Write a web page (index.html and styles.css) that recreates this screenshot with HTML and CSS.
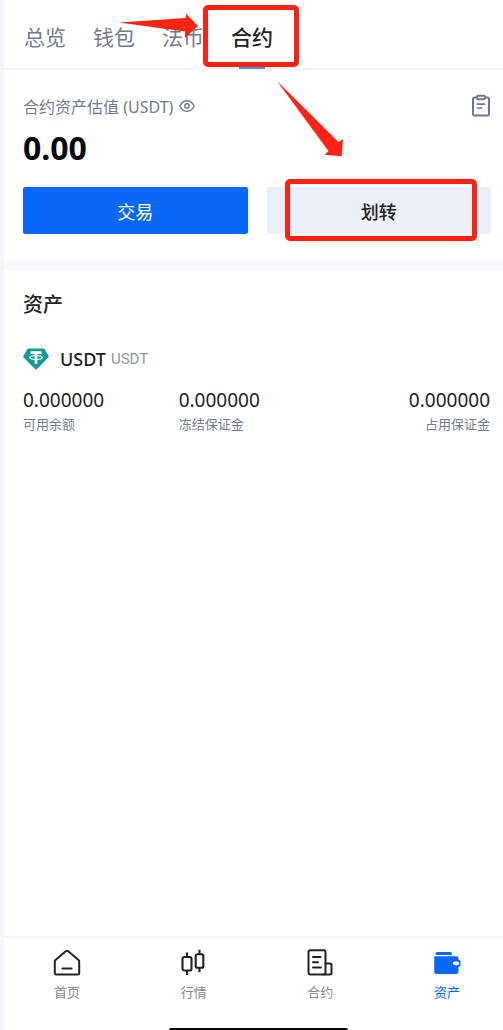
FILE: index.html
```
<!DOCTYPE html>
<html lang="zh-CN">
<head>
<meta charset="utf-8">
<meta name="viewport" content="width=device-width, initial-scale=1">
<title>合约资产</title>
<link rel="stylesheet" href="styles.css">
</head>
<body>
<div class="app">
  <nav class="tabs">
    <a class="tab" href="#overview">总览</a>
    <a class="tab" href="#wallet">钱包</a>
    <a class="tab" href="#fiat">法币</a>
    <a class="tab tab-active" href="#futures">合约<span class="mark mark-tab"></span></a>
  </nav>
  <main class="content">
    <section class="summary">
      <div class="summary-top">
        <span class="summary-label">合约资产估值 (USDT)</span>
        <button class="icon-button" type="button" aria-label="显示或隐藏">
          <svg width="16" height="16" viewBox="0 0 16 16" fill="none" stroke="#727b8e" stroke-width="1.5"><path d="M.8 8C2.6 4.4 5 2.700 8 2.700S13.400 4.400 15.200 8C13.400 11.600 11 13.300 8 13.300S2.600 11.600.8 8z"/><circle cx="8" cy="8" r="2.200"/></svg>
        </button>
        <button class="icon-button records" type="button" aria-label="记录">
          <svg width="20" height="24" viewBox="0 0 20 24" fill="none" stroke="#6f788c" stroke-width="2" stroke-linejoin="round" stroke-linecap="round"><path d="M6 3.500H3.500Q2 3.500 2 5V20Q2 21.500 3.500 21.500H16.500Q18 21.500 18 20V5Q18 3.500 16.500 3.500H14"/><rect x="6" y="1.800" width="8" height="3.400" rx="1.200"/><path d="M6.500 10.200H13.500M6.500 14H10.500" stroke-width="1.700"/></svg>
        </button>
      </div>
      <div class="balance">0.00</div>
      <div class="actions">
        <button class="action action-primary" type="button">交易</button>
        <button class="action action-plain" type="button">划转<span class="mark mark-action"></span></button>
      </div>
    </section>
    <section class="assets">
      <h2 class="assets-title">资产</h2>
      <div class="coin">
        <svg width="26" height="22" viewBox="0 0 26 22"><path d="M5.500.5H20.500Q21.300.5 21.700 1.200L25.700 8.300Q26 9 25.400 9.600L13.700 21.200Q13 21.800 12.300 21.200L.6 9.600Q0 9 .3 8.300L4.300 1.200Q4.700.5 5.500.5z" fill="#159a91"/><path d="M7.500 4.600H18.500M13 4.600V16" stroke="#fff" stroke-width="2.600" fill="none"/><ellipse cx="13" cy="9.500" rx="6.300" ry="1.900" fill="none" stroke="#fff" stroke-width="1.200"/></svg>
        <span class="coin-name">USDT</span>
        <span class="coin-full">USDT</span>
      </div>
      <dl class="figures">
        <div class="figure"><dt>可用余额</dt><dd>0.000000</dd></div>
        <div class="figure"><dt>冻结保证金</dt><dd>0.000000</dd></div>
        <div class="figure figure-end"><dt>占用保证金</dt><dd>0.000000</dd></div>
      </dl>
    </section>
  </main>
  <footer class="bottom">
    <nav class="menu">
      <a class="menu-item" href="#home">
        <svg width="28" height="28" viewBox="0 0 28 28" fill="none" stroke="#222" stroke-width="2" stroke-linejoin="round" stroke-linecap="round"><path d="M1.800 12.500Q1.800 11.500 2.500 10.900L13 2.100Q14 1.400 15 2.100L25.500 10.900Q26.200 11.500 26.200 12.500V24Q26.200 25.500 24.700 25.500H3.300Q1.800 25.500 1.800 24z"/><path d="M9.500 19.500H18.500" stroke-width="2.200"/></svg>
        首页</a>
      <a class="menu-item" href="#markets">
        <svg width="28" height="28" viewBox="0 0 28 28" fill="none" stroke="#222" stroke-width="2.100" stroke-linecap="butt"><rect x="2.500" y="8" width="9" height="13.500" rx="1.800"/><path d="M7 3.500V8M7 21.500V26"/><rect x="15.700" y="5.200" width="7.600" height="13.500" rx="1.800"/><path d="M19.500 .8V5.200M19.500 18.700V23.200"/></svg>
        行情</a>
      <a class="menu-item" href="#contracts">
        <svg width="28" height="28" viewBox="0 0 28 28" fill="none" stroke="#222" stroke-width="2" stroke-linejoin="round" stroke-linecap="round"><rect x="2.500" y="1.200" width="17" height="24.300" rx="2"/><path d="M7 8H14.500M7 13.200H12M7 18.400H15"/><path d="M19.500 14.500H24Q25.500 14.500 25.500 16V24Q25.500 25.500 24 25.500H18"/></svg>
        合约</a>
      <a class="menu-item menu-active" href="#assets">
        <svg width="28" height="28" viewBox="0 0 28 28"><path d="M4.200 3H17.500Q19 3 19 4.500V6H2.700V4.500Q2.700 3 4.200 3z" fill="#0868fb"/><path d="M1.200 7.200H23.500Q25.500 7.200 25.500 9.200V11H26Q27.600 11 27.600 12.700V16Q27.600 17.700 26 17.700H25.500V22.500Q25.500 25 23 25H3.700Q1.200 25 1.200 22.500z" fill="#0868fb"/><rect x="20" y="12.600" width="6.200" height="3.700" rx="1.800" fill="#fff"/></svg>
        资产</a>
    </nav>
    <div class="home-bar"></div>
  </footer>
  <svg class="arrows" width="360" height="170" viewBox="0 0 360 170" fill="#ff2313" aria-hidden="true"><path d="M119 22.500L186 18V13.500L198 26L185 38V31.500Z"/><path d="M277 81L338.500 142L343 139L341.700 156.300L324.500 154.800L328.500 151Z"/></svg>
</div>
</body>
</html>
```
FILE: styles.css
```
* {
  box-sizing: border-box;
}

body {
  margin: 0;
  background: #fff;
  color: #222;
  font-family: "Noto Sans", "Noto Sans CJK SC", sans-serif;
}

a {
  color: inherit;
  text-decoration: none;
}

button {
  border: 0;
  padding: 0;
  font: inherit;
  color: inherit;
  background: none;
}

svg {
  display: block;
  flex: none;
}

.app {
  position: relative;
  display: flex;
  flex-direction: column;
  min-height: 100vh;
  overflow: hidden;
  border-left: 4px solid #f4f6fa;
}

.tabs {
  display: flex;
  gap: 27px;
  padding: 0 20px;
  border-bottom: 2px solid #f3f4f6;
  font-size: 21px;
  line-height: 32px;
  color: #727b8e;
}

.tab {
  position: relative;
  padding: 21px 0 15px;
}

.tab-active {
  color: #222;
  font-weight: 500;
}

.tab-active::after {
  content: "";
  position: absolute;
  bottom: -1px;
  left: 8px;
  right: 8px;
  height: 3px;
  background: #4f91f6;
}

.mark {
  position: absolute;
  z-index: 1;
  border: 5px solid #ff2010;
  border-radius: 5px;
}

.mark-tab {
  inset: 5px -26px 1px -28px;
}

.mark-action {
  inset: -8px 14px -7px 18px;
}

.arrows {
  position: absolute;
  top: 0;
  left: -4px;
  z-index: 2;
  pointer-events: none;
}

.content {
  flex: 1;
}

.summary {
  padding: 24px 12px 26px 19px;
  border-bottom: 10px solid #f7f9fc;
}

.summary-top {
  display: flex;
  align-items: center;
  gap: 6px;
  height: 23px;
  font-size: 16px;
  color: #727b8e;
}

.records {
  margin-left: auto;
}

.balance {
  margin: 11px 0 19px;
  font-size: 32px;
  line-height: 40px;
  font-weight: 700;
  color: #08090b;
}

.actions {
  display: grid;
  grid-template-columns: 1fr 1fr;
  gap: 19px;
}

.action {
  position: relative;
  height: 47px;
  border-radius: 2px;
  font-size: 18px;
}

.action-primary {
  color: #fff;
  background: #0868fb;
}

.action-plain {
  font-weight: 500;
  background: #ebeff8;
}

.assets {
  padding: 19px 13px 20px 19px;
}

.assets-title {
  margin: 0;
  font-size: 20px;
  line-height: 32px;
  font-weight: 500;
}

.coin {
  display: flex;
  align-items: center;
  margin: 25px 0 14px;
  line-height: 26px;
}

.coin-name {
  margin: 0 5px 0 11px;
  font-size: 18px;
  font-weight: 500;
}

.coin-full {
  font-family: Roboto, sans-serif;
  font-size: 15px;
  color: #8f96a5;
}

.figures {
  display: grid;
  grid-template-columns: 1fr 1fr 1fr;
  margin: 0;
}

.figure {
  display: flex;
  flex-direction: column-reverse;
}

.figure-end {
  text-align: right;
}

.figure dt {
  font-size: 13px;
  line-height: 20px;
  color: #727b8e;
}

.figure dd {
  margin: 0;
  font-size: 19px;
  line-height: 28px;
  color: #222;
}

.bottom {
  border-top: 2px solid #f3f4f6;
}

.menu {
  display: flex;
  justify-content: space-between;
  padding: 11px 42px 26px 49px;
}

.menu-item {
  display: flex;
  flex-direction: column;
  align-items: center;
  gap: 5px;
  font-size: 13px;
  line-height: 20px;
  color: #85878c;
}

.menu-active {
  color: #0868fb;
}

.home-bar {
  width: 36%;
  height: 2px;
  margin-left: 33%;
  border-radius: 2px 2px 0 0;
  background: #000;
}
```
